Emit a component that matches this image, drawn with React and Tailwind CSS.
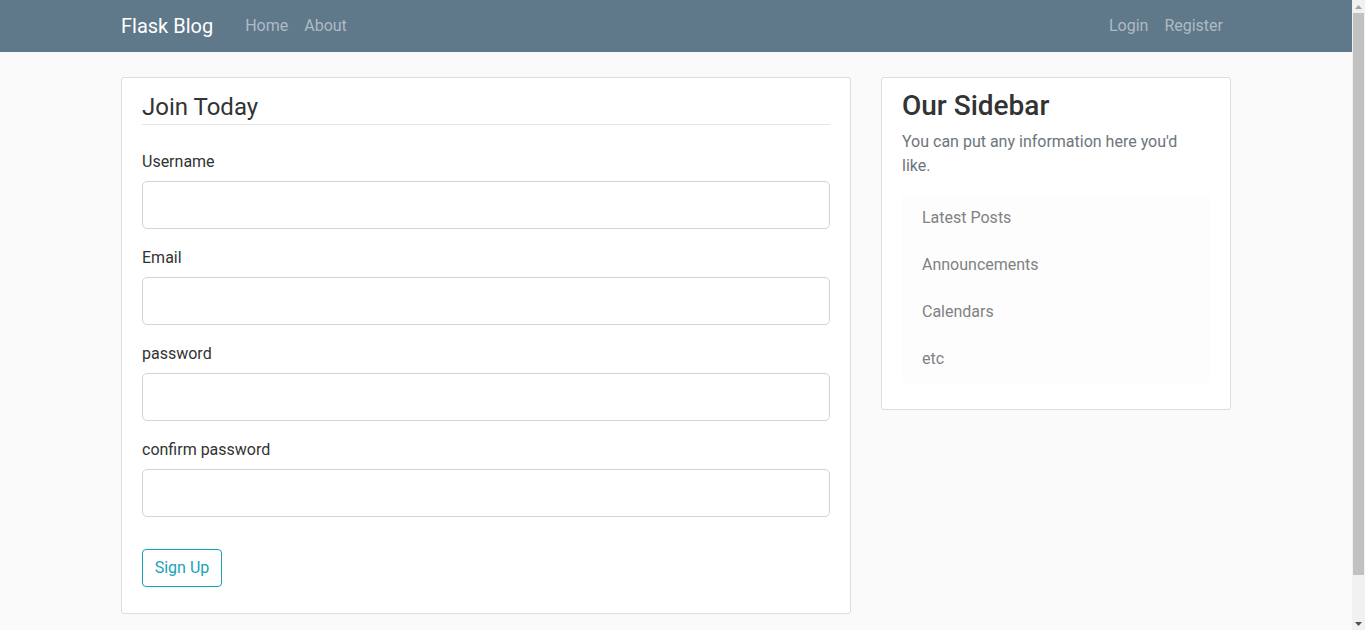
import React from "react";

const fields = [
  { label: "Username", type: "text" },
  { label: "Email", type: "email" },
  { label: "password", type: "password" },
  { label: "confirm password", type: "password" },
];

const links = ["Latest Posts", "Announcements", "Calendars", "etc"];

export default function App() {
  return (
    <div className="h-screen flex overflow-hidden bg-[#fafafa] text-[#333333] font-['Roboto',sans-serif] text-base leading-6">
      <div className="flex-1 min-w-0">
        {/* Navbar */}
        <nav className="bg-[#5f788a] h-[52px]">
          <div className="max-w-[1140px] mx-auto px-[15px] h-full flex items-center">
            <a href="#" className="text-white text-[20px] leading-[30px] mr-6">
              Flask Blog
            </a>
            <div className="flex">
              <a href="#" className="px-2 text-[#afbbc4] hover:text-white">Home</a>
              <a href="#" className="px-2 text-[#afbbc4] hover:text-white">About</a>
            </div>
            <div className="flex ml-auto">
              <a href="#" className="px-2 text-[#afbbc4] hover:text-white">Login</a>
              <a href="#" className="px-2 text-[#afbbc4] hover:text-white">Register</a>
            </div>
          </div>
        </nav>

        {/* Main */}
        <main className="max-w-[1140px] mx-auto px-[15px] pt-[25px] pb-5 flex gap-[30px]">
          {/* Form */}
          <div className="w-[730px] shrink-0 bg-white border border-[#dddddd] rounded-[3px] px-5 py-[10px]">
            <form>
              <fieldset className="mb-4">
                <legend className="w-full text-[24px] leading-[34px] pt-[2px] border-b border-[#e5e5e5] mb-6">
                  Join Today
                </legend>
                {fields.map((f) => (
                  <div key={f.label} className="mb-4">
                    <label className="block mb-2 pt-px h-6">{f.label}</label>
                    <input
                      type={f.type}
                      className="block w-full h-12 px-4 text-[20px] bg-white border border-[#ced4da] rounded-[5px] outline-none"
                    />
                  </div>
                ))}
              </fieldset>
              <div className="mb-4">
                <button
                  type="button"
                  className="h-[38px] w-[80px] border border-[#17a2b8] text-[#17a2b8] rounded-[4px] leading-6"
                >
                  Sign Up
                </button>
              </div>
            </form>
          </div>

          {/* Sidebar */}
          <div className="w-[350px] shrink-0 self-start bg-white border border-[#dddddd] rounded-[3px] px-5 py-[10px]">
            <h3 className="text-[28px] leading-[31.6px] font-medium mb-2 pt-[2px]">Our Sidebar</h3>
            <p className="text-[#6c757d] mb-4 max-w-[300px]">
              You can put any information here you'd like.
            </p>
            <ul className="mb-4">
              {links.map((l) => (
                <li
                  key={l}
                  className="bg-[#fdfdfe] text-[#818182] px-5 py-3 h-[47px] first:rounded-t-[4px] last:rounded-b-[4px] last:h-[48px]"
                >
                  {l}
                </li>
              ))}
            </ul>
          </div>
        </main>
      </div>

      {/* Scrollbar */}
      <div className="w-[13px] shrink-0 bg-[#f1f1f1] flex flex-col items-center">
        <div className="h-[13px] w-full flex items-center justify-center">
          <svg width="7" height="4" viewBox="0 0 7 4">
            <path d="M0 4 L3.5 0 L7 4 Z" fill="#a3a3a3" />
          </svg>
        </div>
        <div className="w-[11px] h-[562px] bg-[#c1c1c1]" />
        <div className="flex-1" />
        <div className="h-[13px] w-full flex items-center justify-center">
          <svg width="7" height="4" viewBox="0 0 7 4">
            <path d="M0 0 L7 0 L3.5 4 Z" fill="#505050" />
          </svg>
        </div>
      </div>
    </div>
  );
}
